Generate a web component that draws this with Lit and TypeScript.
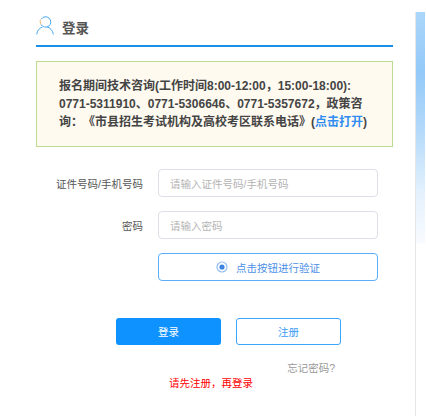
import { LitElement, html, css } from "lit";
import { customElement } from "lit/decorators.js";

@customElement("app-root")
export class AppRoot extends LitElement {
  static styles = css`
    :host {
      display: block;
      width: 426px;
      height: 416px;
      overflow: hidden;
      background: #fff;
      font-family: "Liberation Sans", "Noto Sans CJK SC", sans-serif;
      text-spacing-trim: space-all;
    }
    .page {
      display: flex;
      height: 416px;
    }
    .main {
      width: 357px;
      margin-left: 36px;
      flex: none;
    }
    .side {
      width: 10px;
      margin: 12px 0 0 22px;
      flex: none;
      border-left: 1px solid #e6e6e6;
      box-sizing: border-box;
      background: linear-gradient(#abd7fa 0, #93c9f9 60px, #b5dafa 120px, #e3f1fd 180px, #f8fbff 231px, #fff 232px);
    }
    .head {
      height: 47px;
      display: flex;
      align-items: center;
      gap: 8px;
      box-sizing: border-box;
      border-bottom: 2px solid #1a8fe8;
    }
    .head svg { margin-top: 6px; }
    .head h1 {
      margin: 8px 0 0;
      font-size: 13.5px;
      font-weight: 700;
      color: #555;
    }
    .notice {
      margin-top: 14px;
      height: 86px;
      box-sizing: border-box;
      border: 1px solid #bcdc93;
      background: #fffaf0;
      padding: 15px 22px;
      font-size: 12px;
      line-height: 18px;
      font-weight: 700;
      color: #444;
      white-space: nowrap;
    }
    .notice a { color: #2f8cf0; text-decoration: none; }
    .form {
      margin-top: 22px;
      display: flex;
      flex-direction: column;
      gap: 14px;
    }
    .row {
      display: flex;
      align-items: center;
      gap: 15px;
    }
    .label {
      width: 107px;
      text-align: right;
      font-size: 10.5px;
      color: #555;
    }
    .input {
      width: 220px;
      height: 28px;
      box-sizing: border-box;
      border: 1px solid #dcdfe6;
      border-radius: 4px;
      padding: 0 11px;
      display: flex;
      align-items: center;
      font-size: 10.5px;
      color: #b4b4b4;
    }
    .verify {
      border-color: #5aaefc;
      color: #4d90e8;
      justify-content: center;
      gap: 8px;
    }
    .actions {
      margin: 37px 0 0 80px;
      display: flex;
      gap: 15px;
    }
    .btn {
      width: 105px;
      height: 27px;
      box-sizing: border-box;
      border-radius: 3px;
      display: flex;
      align-items: center;
      justify-content: center;
      font-size: 10.5px;
    }
    .primary { background: #0d92ff; color: #fff; }
    .outline { border: 1px solid #3ba4fb; color: #3b9cf5; background: #fff; }
    .forgot {
      margin-top: 16px;
      padding-right: 58px;
      text-align: right;
      font-size: 10.5px;
      line-height: 14px;
      color: #999;
    }
    .warn {
      margin: 1px 0 0 133px;
      font-size: 10.5px;
      line-height: 14px;
      color: #f00;
    }
  `;

  render() {
    return html`
      <div class="page">
        <div class="main">
          <div class="head">
            <svg width="18" height="20" viewBox="0 0 18 20" fill="none" stroke="#49a9f2" stroke-width="1">
              <path d="M5.2 3.2A5.2 5.2 0 1 1 5 8.4" />
              <path d="M4.6 3.6C3.9 5 4 6.8 5 8.4" stroke="#f2b46b" />
              <path d="M.7 18.3c.5-3.7 2.6-6.2 5.6-7.2" />
              <path d="M17.3 18.3c-.5-3.8-3-6.6-6.3-7.4" />
            </svg>
            <h1>登录</h1>
          </div>
          <div class="notice">
            报名期间技术咨询(工作时间8:00-12:00，15:00-18:00):<br />
            0771-5311910、0771-5306646、0771-5357672，政策咨<br />
            询：《市县招生考试机构及高校考区联系电话》(<a>点击打开</a>)
          </div>
          <div class="form">
            <div class="row">
              <div class="label">证件号码/手机号码</div>
              <div class="input">请输入证件号码/手机号码</div>
            </div>
            <div class="row">
              <div class="label">密码</div>
              <div class="input">请输入密码</div>
            </div>
            <div class="row">
              <div class="label"></div>
              <div class="input verify">
                <svg width="12" height="12" viewBox="0 0 12 12">
                  <circle cx="6" cy="6" r="5" fill="none" stroke="#8fbdf2" stroke-width="1.2" />
                  <circle cx="6" cy="6" r="2.6" fill="#3c86e0" />
                </svg>
                <span>点击按钮进行验证</span>
              </div>
            </div>
          </div>
          <div class="actions">
            <div class="btn primary">登录</div>
            <div class="btn outline">注册</div>
          </div>
          <div class="forgot">忘记密码?</div>
          <div class="warn">请先注册，再登录</div>
        </div>
        <div class="side"></div>
      </div>
    `;
  }
}
